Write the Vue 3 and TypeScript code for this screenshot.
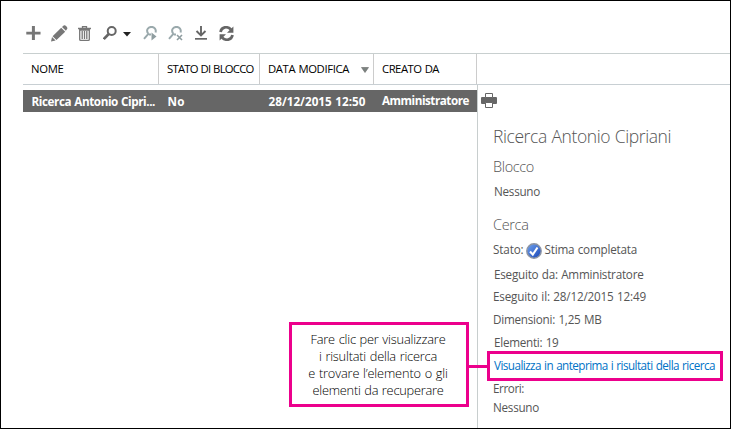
<script setup lang="ts">
import type { Directive } from 'vue'

interface Column { label: string; width: number; sorted?: boolean; cls: string }

// Tracks a text run so that it spans the given width in pixels.
// The gap between words takes a fixed extra so that tight runs stay readable.
const vSpan: Directive<HTMLElement, number> = {
  mounted(el, binding) {
    const text = el.textContent ?? ''
    const words = text.split(' ').length - 1
    const wordGap = 0.6
    const natural = el.getBoundingClientRect().width + words * wordGap
    el.style.wordSpacing = `${wordGap}px`
    el.style.letterSpacing = `${((binding.value - natural) / text.length).toFixed(3)}px`
  },
}

const columns: Column[] = [
  { label: 'NOME', width: 32.5, cls: 'c-name' },
  { label: 'STATO DI BLOCCO', width: 86.5, cls: 'c-hold' },
  { label: 'DATA MODIFICA', width: 81, sorted: true, cls: 'c-date' },
  { label: 'CREATO DA', width: 57, cls: 'c-author' },
]

const cells = [
  { text: 'Ricerca Antonio Cipri...', width: 123.5, cls: 'c-name' },
  { text: 'No', width: 17, cls: 'c-hold' },
  { text: '28/12/2015 12:50', width: 97, cls: 'c-date' },
  { text: 'Amministratore', width: 87, cls: 'c-author' },
]

const callout = [
  { text: 'Fare clic per visualizzare', width: 135 },
  { text: 'i risultati della ricerca', width: 118 },
  { text: 'e trovare l’elemento o gli', width: 139.5 },
  { text: 'elementi da recuperare', width: 131 },
]
</script>

<template>
  <main class="window">
    <nav class="toolbar">
      <svg class="icon" viewBox="0 0 16 16"><path d="M6.3 0h3.2v6h6v3h-6v6H6.3V9h-6V6h6z" fill="#777" /></svg>
      <svg class="icon pencil" viewBox="0 0 17 17"><path d="M0 16.500l1-4.500 3.600 3.500zM1.600 11.200L10.200 2.800l4 3.900-8.700 8.400zM11 2l1.700-1.600c1.200-1.100 4.600 2 3.500 3.400L14.900 5.800z" fill="#777" /></svg>
      <svg class="icon trash" viewBox="0 0 13 15">
        <path d="M4.500 2V.6h4V2M0 2.500h13M1.700 4v9.400q0 .9 1 .9h7.600q1 0 1-.9V4zM4.200 5v8M6.500 5v8M8.800 5v8" fill="none" stroke="#777" stroke-width="1.300" />
      </svg>
      <svg class="icon search" viewBox="0 0 14 14"><circle cx="8.700" cy="5" r="4" fill="none" stroke="#666" stroke-width="2" /><path d="M5.700 8L.8 13" stroke="#666" stroke-width="2.600" /></svg>
      <svg class="caret" viewBox="0 0 8 5"><path d="M0 0h8L4 4.500z" fill="#222" /></svg>
      <svg class="icon resume" viewBox="0 0 15 15">
        <path d="M5.500 8C2 3.500 6 .9 8.500.9c3 0 5 2.500 4 5.600M5.600 7.600L1 12.800M6 8.400h2" fill="none" stroke="#9aa9ac" stroke-width="2" /><path d="M8.500 6.500l5 4-5 4z" fill="#8f9da0" />
      </svg>
      <svg class="icon cancel" viewBox="0 0 15 15">
        <path d="M5.500 8C2 3.500 6 .9 8.500.9c3 0 5 2.500 4 5.600M5.600 7.600L1 12.800M6 8.400h2" fill="none" stroke="#9aa9ac" stroke-width="2" /><path d="M9 9l5 5M14 9l-5 5" stroke="#8f9da0" stroke-width="1.600" />
      </svg>
      <svg class="icon download" viewBox="0 0 12 14"><path d="M6 0v9M1.500 5L6 9.500 10.500 5" fill="none" stroke="#666" stroke-width="1.900" /><path d="M0 12h12v1.700H0z" fill="#666" /></svg>
      <svg class="icon refresh" viewBox="0 0 15 15">
        <path d="M1.500 6C2.500.5 8.500 0 12 3.500M13.500 9C12.500 14.500 6.500 15 3 11.500" fill="none" stroke="#666" stroke-width="2.700" /><path d="M14.400.5v6.300H8zM.6 14.500V8.200H7z" fill="#666" />
      </svg>
    </nav>

    <header class="head">
      <div v-for="c in columns" :key="c.label" class="cell" :class="c.cls">
        <span v-span="c.width">{{ c.label }}</span>
        <svg v-if="c.sorted" class="sort" viewBox="0 0 8 6"><path d="M.5.5h7L4 5.500z" fill="#7b8380" stroke="#666" stroke-width=".6" /></svg>
      </div>
    </header>

    <div class="body">
      <section class="list">
        <div class="row">
          <div v-for="c in cells" :key="c.text" class="cell" :class="c.cls"><span v-span="c.width">{{ c.text }}</span></div>
        </div>
      </section>

      <aside class="details">
        <svg class="printer" viewBox="0 0 16 15">
          <path d="M0 5q0-1 1-1h14q1 0 1 1v5q0 1-1 1H1q-1 0-1-1z" fill="#666" />
          <path d="M4.500.5h7v4h-7zM4.500 9.500h7v5h-7z" fill="#fff" stroke="#666" />
        </svg>
        <h1><span v-span="178">Ricerca Antonio Cipriani</span></h1>
        <h2 class="hold-title"><span v-span="41">Blocco</span></h2>
        <p class="hold indent"><span v-span="46">Nessuno</span></p>
        <h2 class="search-title"><span v-span="35.500">Cerca</span></h2>
        <p class="status">
          <span v-span="30.500">Stato:</span>
          <svg class="check" viewBox="0 0 16 16">
            <defs><linearGradient id="blue" x1="0" y1="0" x2="1" y2="1"><stop offset="0" stop-color="#72a5ef" /><stop offset="1" stop-color="#1743b5" /></linearGradient></defs>
            <circle cx="8" cy="8" r="7.200" fill="url(#blue)" stroke="#8c94a3" stroke-width="1.400" />
            <path d="M4 8.500l2.800 3L11.500 4.500" fill="none" stroke="#fff" stroke-width="2.100" />
          </svg>
          <span v-span="92.500">Stima completata</span>
        </p>
        <p class="by indent"><span v-span="149.500">Eseguito da: Amministratore</span></p>
        <p class="on"><span v-span="153">Eseguito il: 28/12/2015 12:49</span></p>
        <p class="size"><span v-span="108.500">Dimensioni: 1,25 MB</span></p>
        <p class="items indent"><span v-span="64.500">Elementi: 19</span></p>
        <a class="link"><span v-span="221">Visualizza in anteprima i risultati della ricerca</span></a>
        <p class="errors"><span v-span="31">Errori:</span></p>
        <p class="none"><span v-span="46">Nessuno</span></p>
      </aside>
    </div>

    <div class="callout">
      <div v-for="l in callout" :key="l.text"><span v-span="l.width">{{ l.text }}</span></div>
    </div>
    <div class="connector"></div>
    <div class="highlight"></div>
  </main>
</template>

<style>
body { margin: 0; background: #fff; }
</style>

<style scoped>
.window {
  position: relative;
  box-sizing: border-box;
  width: 731px;
  height: 429px;
  border: 1px solid #000;
  display: flex;
  flex-direction: column;
  overflow: hidden;
  background: #fff;
  color: #555;
  font: 11.700px/16px "Open Sans", "Noto Sans", sans-serif;
  white-space: nowrap;
}
.toolbar { height: 27px; padding: 25px 0 0 25px; display: flex; align-items: flex-start; }
.icon { flex: none; width: 15px; height: 15px; }
.pencil { width: 17px; height: 17px; margin: -1px 0 0 10px; }
.trash { width: 13px; height: 15px; margin-left: 10px; }
.search { width: 14px; height: 14px; margin: 0 0 0 12px; }
.caret { flex: none; width: 8px; height: 5px; margin: 6px 0 0 6px; }
.resume { margin-left: 12px; }
.cancel { margin-left: 10px; }
.download { width: 12px; height: 14px; margin-left: 12px; }
.refresh { margin-left: 12px; }

.head {
  height: 30px;
  margin-left: 22px;
  border-top: 1px solid #c8cfcf;
  border-bottom: 1px solid #c8cfd3;
  display: flex;
  color: #000;
  font-size: 11.300px;
  line-height: 30px;
}
.cell { box-sizing: border-box; flex: none; padding-left: 8px; }
.head .cell { border-right: 1px solid #ccc; display: flex; align-items: center; }
.c-name { width: 136px; }
.c-hold { width: 101px; }
.c-date { width: 114px; }
.c-author { width: 103px; }
.sort { width: 8px; height: 6px; margin-left: 12px; margin-top: 2px; }

.body { flex: 1; display: flex; padding-left: 22px; }
.list { width: 454px; border-right: 1px solid #c8cece; padding-top: 5px; }
.row { height: 22px; display: flex; background: #666; color: #fff; font-weight: 700; line-height: 23px; }
.row .cell { padding-left: 8.500px; }
.row .c-author { padding-left: 8px; line-height: 20px; }

.details { width: 237px; padding: 8px 0 0 3px; display: flex; flex-direction: column; }
.printer { flex: none; width: 16px; height: 15px; }
h1, h2, p { margin: 0; padding-left: 12px; }
h1 { margin-top: 16px; font-weight: 300; font-size: 17.500px; line-height: 24px; }
h2 { font-weight: 300; font-size: 14.500px; line-height: 20px; }
.indent, .link { padding-left: 13px; }
.hold-title { margin-top: 9px; }
.hold { margin-top: 6px; }
.search-title { margin-top: 16px; }
.status { margin-top: 6px; height: 16px; display: flex; }
.check { width: 16px; height: 16px; margin: 2px 3px 0 2px; }
.by { margin-top: 9px; }
.on { margin-top: 6px; }
.size, .items, .link, .errors { margin-top: 7px; }
.link { color: #0072c6; }
.none { margin-top: 3px; }

.callout {
  position: absolute;
  left: 288px;
  top: 321px;
  width: 180px;
  height: 85px;
  box-sizing: border-box;
  border: 3px solid #ec008c;
  padding: 6px 2px 0 0;
  background: #fff;
  color: #000;
  font-weight: 300;
  font-size: 12.800px;
  line-height: 17px;
  text-align: center;
}
.connector { position: absolute; left: 468px; top: 364px; width: 18px; height: 3px; background: #ec008c; }
.highlight { position: absolute; left: 486px; top: 350px; width: 236px; height: 30px; box-sizing: border-box; border: 3px solid #ec008c; }
</style>
